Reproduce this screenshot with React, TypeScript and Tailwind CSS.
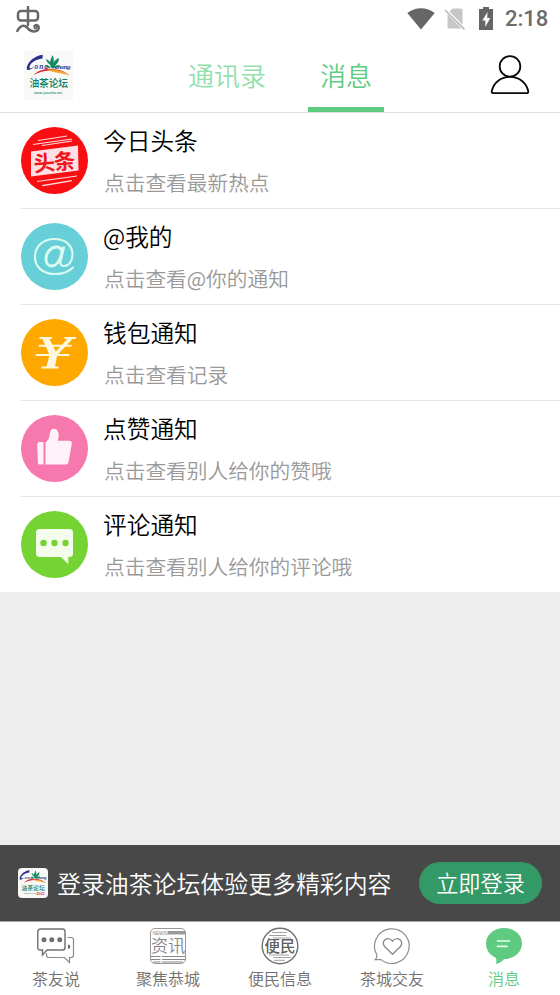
import React from 'react';

const CJK = '"Noto Sans CJK SC", sans-serif';

const Logo = ({ className, dated }: { className: string; dated?: boolean }) => (
  <svg viewBox="0 0 49 49" className={className}>
    <rect width="49" height="49" fill="#f8f9f7" />
    <path d="M18.700 3.800C11 4.500 3.500 11 2.700 17c-.3 3.200 4 2.500 7.800-1.500-3 2-5.300 2.500-5 .5C6.200 12 11 8.500 18.500 7.500z" fill="#2c2f8c" />
    <text x="10.500" y="18" fontSize="7.500" fontStyle="italic" fontWeight="700" textLength="13.500" fill="#35388f" fontFamily='"Liberation Serif", serif'>ong</text>
    <text x="31" y="17.500" fontSize="7" fontStyle="italic" fontWeight="700" textLength="15.500" fill="#35388f" fontFamily='"Liberation Serif", serif'>cheng</text>
    <path d="M27.500 17c-3-4-1-8 1-13 2 4 1.500 7 .3 10 1-4 3.200-6 6.200-7 0 4-2 6-4.500 8 2-1 4-1 5.500 0-2 2-5 2.500-8.500 2zM26.500 14c-2-1-4-3-4.500-6 3 1 4.500 3 4.500 6zM26.500 17c-2 0-4-.5-5.500-2.500 2.500-.8 4.500.3 5.500 2.500z" fill="#148a62" />
    <path d="M9.500 24c7-7.500 23-9.500 37 .5-11-6-24-7-37-.5z" fill="#d92b35" />
    <path d="M23 18.800c9-1 17 1.700 23 5.900-7-2.500-15-2.500-23-5.900z" fill="#f6a52b" />
    <text x="5.500" y="36" fontSize="9.800" fontWeight="500" textLength="38.500" fill="#157a58" fontFamily={CJK}>油茶论坛</text>
    <text x="10" y="42.800" fontSize="4" fontWeight="700" textLength={dated ? 19 : 28} lengthAdjust="spacingAndGlyphs" fill="#4b9d82" fontFamily='"Liberation Sans", sans-serif'>www.youcha.net</text>
    {dated && <text x="30" y="44.500" fontSize="7" fontWeight="700" textLength="14" lengthAdjust="spacingAndGlyphs" fill="#d9303a" fontFamily='"Liberation Sans", sans-serif'>2021</text>}
  </svg>
);

const HeadlineIcon = () => (
  <svg viewBox="0 0 67 67" className="size-[67px]">
    <circle cx="33.500" cy="33.500" r="33.500" fill="#f90e12" />
    <path d="M17 13.500L46 9M12 17.500L51 12M21 18.500L51 14M16 54.500L56 49M21 58.500L51 53.500M22 58.700L50 54" stroke="#ffd9dc" strokeWidth="1.100" />
    <path d="M10 24.500L57 18.500 57.500 43.500 10 49.500z" fill="#ffe1e5" />
    <text x="12.500" y="43" fontSize="21.500" fontWeight="700" textLength="42" fill="#f0161c" fontFamily={CJK} transform="rotate(-5 33 36)">头条</text>
  </svg>
);

const AtIcon = () => (
  <svg viewBox="0 0 67 67" className="size-[67px]">
    <circle cx="33.500" cy="33.500" r="33.500" fill="#66cfd7" />
    <g fill="none" stroke="#d9fbf0" strokeLinecap="round">
      <path d="M52 44.500C47.500 49 40 51.300 33 51 21 50.500 14 43.500 14 34 14 23 22.500 16 33.500 16c11 0 18 6.500 18 15.500 0 7-4 11.500-8.300 11.500-3.500 0-4.200-2-3.500-5L43 24.500" strokeWidth="2.100" />
      <path d="M41 28.500c-.8-3-2.500-4.500-5.500-4.500-6 0-10.500 6-10.500 12 0 4.500 2.300 7 5.500 7 4 0 7.500-4 9-8.500l2.500-9.500" strokeWidth="2.900" />
    </g>
  </svg>
);

const YuanIcon = () => (
  <svg viewBox="0 0 67 67" className="size-[67px]">
    <circle cx="33.500" cy="33.500" r="33.500" fill="#ffa800" />
    <g fill="#fff8df">
      <path d="M18.500 18H31v1.900h-2.500l6.300 12.600L46.300 19.900h-2.800V18H55v1.900h-3.500L36.300 36 34 47.600h3.500v1.900h-17v-1.900h5L28.500 36 21.500 19.900h-3z" />
      <path d="M17.700 25.800h33v1.900h-33zM14.700 35h33.500v1.900H14.700z" />
    </g>
  </svg>
);

const ThumbIcon = () => (
  <svg viewBox="0 0 67 67" className="size-[67px]">
    <circle cx="33.500" cy="33.500" r="33.500" fill="#f778ac" />
    <g fill="#fff1f8">
      <path d="M18.800 27h3.700v22.500h-3.700c-1.200 0-1.800-.8-1.900-1.800l-.7-18c0-1.700 1-2.700 2.600-2.700z" />
      <path d="M24.500 27.500c2.500-1.500 3.800-4.500 4.300-8.500.4-3.500 1.700-5.200 4-5.200 3.200 0 4.900 2.800 4.900 6.300 0 2.200-.4 4-.8 5.600h11.300c2 0 3 1.300 2.600 3.200l-3.300 18.300c-.3 1.500-1.500 2.300-3 2.300h-20z" />
    </g>
  </svg>
);

const CommentIcon = () => (
  <svg viewBox="0 0 67 67" className="size-[67px]">
    <circle cx="33.500" cy="33.500" r="33.500" fill="#75d433" />
    <path d="M18.500 18h30a3.500 3.500 0 0 1 3.500 3.500V42.500a3.500 3.500 0 0 1-3.500 3.500H47.300V53.300L40 46H18.500A3.500 3.500 0 0 1 15 42.500V21.500a3.500 3.500 0 0 1 3.500-3.500z" fill="#f4fceb" />
    <g fill="#75d433">
      <circle cx="22.500" cy="32" r="3.200" />
      <circle cx="33.500" cy="32" r="3.200" />
      <circle cx="44.500" cy="32" r="3.200" />
    </g>
  </svg>
);

const ChatTabIcon = () => (
  <svg viewBox="0 0 38 38" className="size-[38px]" fill="none" stroke="#707070">
    <path d="M3.500 2h22A2.500 2.500 0 0 1 28 4.500v16a2.500 2.500 0 0 1-2.500 2.500H10l-4.500 5V23H3A2 2 0 0 1 .8 21V4.500A2.500 2.500 0 0 1 3.500 2z" strokeWidth="1.400" />
    <path d="M30.500 10.500H34a2.500 2.500 0 0 1 2.500 2.500v15a2.500 2.500 0 0 1-2.500 2.500h-1.500v5l-5-5H12a2.500 2.500 0 0 1-2.500-2.500v-2" stroke="#8a8a8a" strokeWidth="1.200" />
    <g fill="#707070" stroke="none">
      <circle cx="7" cy="12.700" r="2.500" />
      <circle cx="14.800" cy="12.700" r="2.500" />
      <circle cx="22.700" cy="12.700" r="2.500" />
      <path d="M31 17.500a2.300 2.300 0 0 1 0 4.600z" />
    </g>
  </svg>
);

const NewsTabIcon = () => (
  <svg viewBox="0 0 38 38" className="size-[38px]">
    <rect x="1.500" y="1.500" width="35" height="35" rx="4.500" fill="none" stroke="#999" />
    <text x="3.500" y="7.500" fontSize="5" textLength="14.500" fill="#888" fontFamily='"Liberation Sans", sans-serif'>NEWS</text>
    <path d="M18.500 4h17.500v3.500h-17.500z" fill="#999" />
    <text x="1.800" y="24.800" fontSize="17.300" textLength="34.500" fill="#888" fontFamily={CJK}>资讯</text>
    <path d="M2 29.500h9.500M13 29.500h23M2 32.500h9.500M13 32.500h23M4 35h7.500M13 35h21" stroke="#888" />
  </svg>
);

const ServiceTabIcon = () => (
  <svg viewBox="0 0 38 38" className="size-[38px]">
    <circle cx="19" cy="19" r="17.800" fill="none" stroke="#707070" strokeWidth="1.400" />
    <path d="M11 5.500h15M8 8.500h17M12 11h18M8 28h20M12 30.500h18M13 33.300h11" stroke="#999" strokeWidth=".9" />
    <text x="3.500" y="25.200" fontSize="15.500" fontWeight="500" textLength="31" fill="#606060" fontFamily={CJK}>便民</text>
  </svg>
);

const HeartTabIcon = () => (
  <svg viewBox="0 0 38 38" className="size-[38px]" fill="none" stroke="#8c8c8c" strokeWidth="1.200">
    <path d="M3.700 27.500A17.300 17.300 0 1 1 8 32.600H2.200c1.600-1.500 2.100-3 1.500-5.100z" />
    <path d="M19.500 27.200l-7.700-7.500c-2.300-2.500-1.800-5.500.2-7 2.400-1.800 5.600-1 7.500 1.500 1.900-2.500 5.100-3.300 7.500-1.500 2 1.500 2.500 4.500.2 7z" strokeWidth="1.400" />
  </svg>
);

const MessageTabIcon = () => (
  <svg viewBox="0 0 38 38" className="size-[38px]">
    <path d="M19 1c10 0 18 6.800 18 15.500S29 32 19 32c-1 2-4.500 4.500-8.500 5 1.200-2 1.200-4.300.3-6.200C5 28 1 23.500 1 16.500 1 7.800 9 1 19 1z" fill="#5fcb80" />
    <path d="M12.500 14h12M12.500 19.300h9.500" stroke="#e9fff0" strokeWidth="1.700" strokeLinecap="round" />
  </svg>
);

const App = () => {
  const notices = [
    { icon: HeadlineIcon, title: '今日头条', detail: '点击查看最新热点' },
    { icon: AtIcon, title: '@我的', detail: '点击查看@你的通知' },
    { icon: YuanIcon, title: '钱包通知', detail: '点击查看记录' },
    { icon: ThumbIcon, title: '点赞通知', detail: '点击查看别人给你的赞哦' },
    { icon: CommentIcon, title: '评论通知', detail: '点击查看别人给你的评论哦' },
  ];

  const tabs = [
    { icon: ChatTabIcon, label: '茶友说' },
    { icon: NewsTabIcon, label: '聚焦恭城' },
    { icon: ServiceTabIcon, label: '便民信息' },
    { icon: HeartTabIcon, label: '茶城交友' },
    { icon: MessageTabIcon, label: '消息', active: true },
  ];

  return (
    <div className="flex h-[995px] w-[560px] flex-col overflow-hidden bg-[#eeeeee] font-['Noto_Sans_CJK_SC',sans-serif] font-[350]">
      {/* Status bar */}
      <div className="flex h-10 shrink-0 items-center bg-white pr-3 pb-[3px] pl-[15px]">
        <svg viewBox="0 0 26 28" className="mt-0.5 h-7 w-[26px]" fill="none" stroke="#686868" strokeWidth="2.500" strokeLinecap="round">
          <rect x="3" y="5" width="20" height="9.500" rx="3" />
          <path d="M13 1v18M2.300 25c3-6 7-6.500 10-3.300 3 4.300 10 5.300 11.300.8.800-3-2.500-4.500-4-2.500" />
          <circle cx="20.500" cy="21.500" r=".8" />
        </svg>
        <div className="ml-auto flex items-center">
          <svg viewBox="0 0 28 22" className="mr-[9px] h-[22px] w-7">
            <path d="M.3 5C8-1.300 20-1.300 27.700 5L14 21.500z" fill="#666" />
          </svg>
          <svg viewBox="0 0 22 22" className="mr-[13px] h-[22px] w-[22px]">
            <path d="M8.500.5h8a2 2 0 0 1 2 2v14.300L5.500 3.500zM3.500 6L17.500 20.500h-12a2 2 0 0 1-2-2z" fill="#c6c6c6" />
            <path d="M1 2l19.500 19.300" stroke="#bdbdbd" strokeWidth="1.700" />
          </svg>
          <svg viewBox="0 0 14 23" className="mr-3 h-[23px] w-3.5">
            <path d="M4 0h6v2h4v21H0V2h4z" fill="#666" />
            <path d="M8.500 5L3.300 13.500h3V20l5-9H8.200z" fill="#fff" />
          </svg>
          <span className="w-[43px] pt-px font-[Roboto,sans-serif] text-[22px] leading-6 font-medium text-[#6c6c6c]">2:18</span>
        </div>
      </div>

      {/* Header */}
      <div className="flex h-[73px] shrink-0 border-b border-[#dedede] bg-white">
        <Logo className="mt-[11px] ml-6 size-[49px]" />
        <div className="ml-[115px] flex h-[72px] w-[78px] justify-center pt-4 text-[26px] leading-[38px] whitespace-nowrap text-[#93dfab]">通讯录</div>
        <div className="ml-[42px] flex h-[72px] w-[76px] justify-center border-b-5 border-[#5fcb80] pt-4 text-[26px] leading-[38px] text-[#5fcb80]">消息</div>
        <svg viewBox="0 0 40 40" className="mt-[15px] ml-[106px] size-10" fill="none" stroke="#0a0a0a" strokeWidth="1.800">
          <circle cx="20" cy="11.400" r="10.300" />
          <path d="M3.500 38.200h33c1.500 0 2-.8 1.700-2.200C36.300 27.500 29 21.800 20 21.800S3.700 27.500 1.800 36c-.3 1.400.2 2.200 1.700 2.200z" />
        </svg>
      </div>

      {/* Notices */}
      <div className="shrink-0 bg-white pl-[21px]">
        {notices.map((notice) => {
          const Icon = notice.icon;
          return (
            <div key={notice.title} className="flex h-24 border-b border-[#e6e6e6] pt-3.5 last:h-[95px] last:border-b-0">
              <Icon />
              <div className="-mt-px ml-[15px]">
                <div className="text-[23.700px] leading-7 text-black">{notice.title}</div>
                <div className="mt-3.5 ml-px text-[20.700px] leading-7 text-[#999]">{notice.detail}</div>
              </div>
            </div>
          );
        })}
      </div>

      {/* Login banner */}
      <div className="mt-auto flex h-[76px] shrink-0 items-center bg-[#484848] pr-[18px] pl-[18px]">
        <Logo className="size-[30px] rounded-[4px]" dated />
        <span className="ml-[9px] text-[23.900px] leading-8 whitespace-nowrap text-white">登录油茶论坛体验更多精彩内容</span>
        <button className="ml-auto h-[42px] w-[123px] rounded-full bg-[#339966] pb-0.5 text-[22.200px] leading-8 text-white">立即登录</button>
      </div>

      {/* Bottom tabs */}
      <div className="grid h-[74px] shrink-0 grid-cols-5 border-t border-[#a3a3a3] bg-white">
        {tabs.map((tab) => {
          const Icon = tab.icon;
          return (
            <div key={tab.label} className="flex flex-col items-center pt-[5px]">
              <Icon />
              <span className={tab.active ? 'mt-px text-base leading-6 text-[#5fcb80]' : 'mt-px text-base leading-6 text-[#707070]'}>{tab.label}</span>
            </div>
          );
        })}
      </div>
    </div>
  );
};

export default App;
